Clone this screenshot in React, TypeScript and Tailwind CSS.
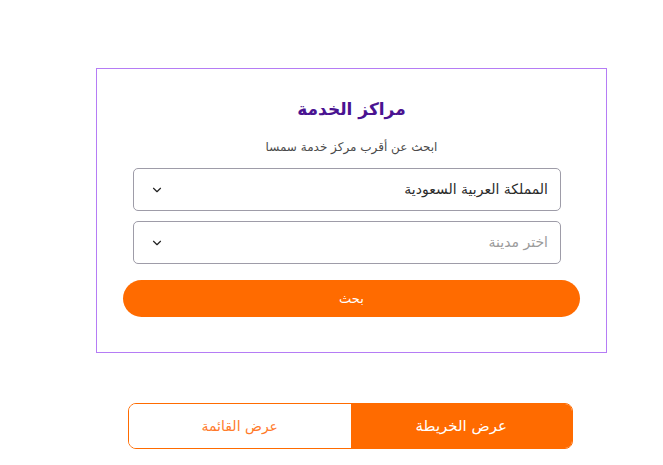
import React from 'react';
import { ChevronDown } from 'lucide-react';

const SelectBox = ({ label, placeholder }: { label: string; placeholder?: boolean }) => (
  <div dir="rtl" className="ml-[36px] w-[428px] h-[43px] border border-[#9e9ca8] rounded-[5px] flex items-center justify-between pr-[12px] pl-[16px] bg-white">
    <span className={`text-[14px] ${placeholder ? 'text-[#9b9b9b]' : 'text-[#2b2b2b]'}`}>{label}</span>
    <ChevronDown size={14} strokeWidth={2} className="text-[#222]" />
  </div>
);

export default function App() {
  return (
    <div dir="rtl" className="w-[663px] h-[465px] bg-white overflow-hidden" style={{ fontFamily: '"DejaVu Sans", sans-serif' }}>
      <div dir="ltr" className="pt-[68px]">
        {/* Service centers card */}
        <div dir="rtl" className="ml-[96px] w-[511px] h-[285px] border border-[#b57cf5] flex flex-col">
          <h2 className="text-center text-[17px] font-bold text-[#4a1391] mt-[28px] leading-[24px]">مراكز الخدمة</h2>
          <p className="text-center text-[12px] text-[#4a4a4a] mt-[18px] leading-[16px]">ابحث عن أقرب مركز خدمة سمسا</p>
          <div dir="ltr" className="flex flex-col gap-[10px] mt-[13px]">
            <SelectBox label="المملكة العربية السعودية" />
            <SelectBox label="اختر مدينة" placeholder />
          </div>
          <div dir="ltr" className="mx-[26px] mt-[16px]">
            <button className="w-full h-[37px] rounded-full bg-[#ff6b00] text-white text-[13px]">بحث</button>
          </div>
        </div>

        {/* View toggle */}
        <div dir="ltr" className="ml-[128px] mt-[50px] w-[445px] h-[46px] flex rounded-[8px] border border-[#ff6b00] overflow-hidden">
          <button className="flex-1 bg-white text-[#ff7a2a] text-[14px]">عرض القائمة</button>
          <button className="flex-1 bg-[#ff6b00] text-white text-[15px]">عرض الخريطة</button>
        </div>
      </div>
    </div>
  );
}
